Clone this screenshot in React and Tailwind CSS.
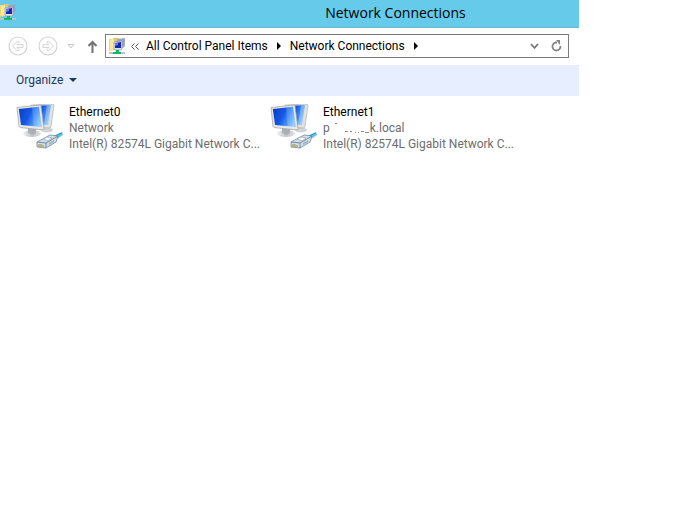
import React from "react";

function FolderNetIcon() {
  return (
    <svg width="17" height="17" viewBox="0 0 17 17" className="shrink-0" aria-hidden="true">
      <path d="M0 1h6v11l-6 1z" fill="#f0d877" />
      <path d="M4 0h6v11H4z" fill="#e3c865" />
      <path d="M1 2l4-1v10l-4 1z" fill="#faeaa0" />
      <path d="M8 1l8-1v8l-2 2H8z" fill="#a3adba" />
      <path d="M9 2l6-1v6l-3 1H9z" fill="#8fa0d0" />
      <path d="M5 4l8-1v8l-1 1H6l-1-1z" fill="#dfe4ec" stroke="#8f9aab" strokeWidth=".8" />
      <path d="M6 5l6-1v6H6z" fill="#1526b0" />
      <path d="M6 5h3v2l-3 1z" fill="#5f7ce6" />
      <path d="M0 14h16v2H0z" fill="#b3c9c9" />
      <path d="M7 12h3v2h2v2H4v-2h3z" fill="#16b765" />
    </svg>
  );
}

function NavArrow({ flip }) {
  return (
    <svg width="20" height="20" viewBox="0 0 20 20" fill="none" stroke="#d4d4d4" aria-hidden="true">
      <circle cx="10" cy="10" r="9" strokeWidth="1.2" />
      <path
        transform={flip ? "translate(20 0) scale(-1 1)" : undefined}
        d="M4.5 10l4.7-4.5h1.8v1L9 8.6h6v2.8H9l2 2.1v1H9.2z"
      />
    </svg>
  );
}

function ConnectionIcon({ id }) {
  const screen = "screen-" + id;
  const stand = "stand-" + id;
  return (
    <svg width="48" height="48" viewBox="0 0 48 48" className="shrink-0" aria-hidden="true">
      <defs>
        <linearGradient id={screen} x1="0" y1=".2" x2="1" y2=".6">
          <stop offset="0" stopColor="#0a3fc4" />
          <stop offset=".45" stopColor="#1658e6" />
          <stop offset=".7" stopColor="#3f8cf8" />
          <stop offset="1" stopColor="#8cc6ff" />
        </linearGradient>
        <linearGradient id={stand} x1="0" y1="0" x2="1" y2="0">
          <stop offset="0" stopColor="#f2f2f2" />
          <stop offset=".5" stopColor="#bfc1c3" />
          <stop offset="1" stopColor="#e2e2e2" />
        </linearGradient>
      </defs>
      <ellipse cx="31" cy="26" rx="6" ry="2.5" fill="#d3d4d5" />
      <path d="M15 1l22-1 1 1-3 22-1 1-19-1z" fill="#e2e2df" stroke="#a9a9a5" strokeWidth=".6" />
      <path d="M17 2l18-1-3 20-15-1z" fill={`url(#${screen})`} />
      <path d="M31 1.2l4-.2-3 20-4-.3z" fill="#d4ecfd" opacity=".35" />
      <ellipse cx="16" cy="29.5" rx="9" ry="3.5" fill={`url(#${stand})`} />
      <path d="M12 24l8 1v4l-3 2-5-2z" fill="#adb0b3" />
      <path d="M1 3.5L24 1l1 .6 3 23-1 1.4L4 23.5 3 22.5z" fill="#e8e8e5" stroke="#9c9d9b" strokeWidth=".7" />
      <path d="M2.8 5L23 2.8 25.8 23 5 21z" fill={`url(#${screen})`} />
      <path d="M16 3.6l7-.8L25.8 23l-8-.8z" fill="#c9e6fd" opacity=".2" />
      <path d="M35 33l11-5 1 3-9 6z" fill="#62c4e8" />
      <path d="M39 32l7-3" stroke="#258fc0" fill="none" />
      <path d="M21 38l13-7 8 1-2 6-10 6-9-1z" fill="#d3dee8" stroke="#718b9e" strokeWidth=".8" />
      <path d="M21 38l9 1 12-7M30 39v5" stroke="#5d778a" strokeWidth=".8" fill="none" />
      <path d="M27 35l4-2 5 1-4 3z" fill="#f7fafc" stroke="#849aac" strokeWidth=".6" />
      <path d="M22 40l6 1v2l-6-1z" fill="#e4d899" />
      <path d="M23 40v3M25 40v3M27 41v2" stroke="#776f4c" strokeWidth=".7" />
      <path d="M33 39l5-3v2l-5 3z" fill="#9eb4c3" />
    </svg>
  );
}

function Crumb({ children }) {
  return (
    <li className="flex items-center">
      <a href="#" className="whitespace-nowrap">{children}</a>
      <svg width="4" height="8" viewBox="0 0 4 8" className="mr-[9px] ml-[9px]" aria-hidden="true">
        <path d="M0 0l4 4-4 4z" fill="#000" />
      </svg>
    </li>
  );
}

function RedactedDomain() {
  return (
    <p className="flex">
      <span>p</span>
      <svg width="40" height="16" viewBox="0 0 40 16" className="shrink-0" aria-hidden="true">
        <path d="M5 3.5h2M15 11.5h3M20 11.5h2M25 12.5h1M28 12.5h1M31 11.5h3M35 12.5h4" stroke="#8b8b8b" fill="none" />
      </svg>
      <span>k.local</span>
    </p>
  );
}

function Connection({ id, name, children }) {
  return (
    <li className="flex w-[254px] shrink-0 gap-[5px]">
      <ConnectionIcon id={id} />
      <div className="whitespace-nowrap leading-4 text-[#6d6d6d]">
        <h2 className="text-black">{name}</h2>
        {children}
        <p>Intel(R) 82574L Gigabit Network C...</p>
      </div>
    </li>
  );
}

export default function App() {
  return (
    <div className="min-h-screen bg-white">
      <main className="mr-28 text-[12px] text-black [font-family:'Segoe_UI',Roboto,'Open_Sans',sans-serif]">
        <header className="flex h-7 items-center border-b border-[#70b4d0] bg-[#66cbea] pb-[2px]">
          <FolderNetIcon />
          <h1 className="flex-1 pl-[195px] text-center text-[14px] leading-5 [font-family:'Segoe_UI','Open_Sans',sans-serif]">
            Network Connections
          </h1>
        </header>

        <nav className="flex h-[37px] items-center pr-[10px] pb-px pl-2">
          <button aria-label="Back"><NavArrow /></button>
          <button aria-label="Forward" className="ml-[10px]"><NavArrow flip /></button>
          <button aria-label="Recent locations" className="ml-[9px]">
            <svg width="8" height="5" viewBox="0 0 8 5" aria-hidden="true">
              <path d="M1 .5h6L4 4z" fill="none" stroke="#c9c9c9" />
            </svg>
          </button>
          <button aria-label="Up" className="ml-3">
            <svg width="11" height="13" viewBox="0 0 11 13" aria-hidden="true">
              <path d="M5.5 13V1.5M1.5 6l4-4 4 4" fill="none" stroke="#707070" strokeWidth="2" />
            </svg>
          </button>
          <div className="ml-[7px] flex h-6 flex-1 items-center border border-[#7c7c7c] pr-[6px] pl-[3px]">
            <FolderNetIcon />
            <svg width="8" height="7" viewBox="0 0 8 7" className="ml-[5px]" aria-hidden="true">
              <path d="M3.5.5l-3 3 3 3M7.5.5l-3 3 3 3" fill="none" stroke="#555" />
            </svg>
            <ol className="ml-[7px] flex items-center">
              <Crumb>All Control Panel Items</Crumb>
              <Crumb>Network Connections</Crumb>
            </ol>
            <button aria-label="Previous locations" className="ml-auto">
              <svg width="9" height="7" viewBox="0 0 9 7" aria-hidden="true">
                <path d="M1 1l3.5 4L8 1" fill="none" stroke="#777" strokeWidth="1.8" />
              </svg>
            </button>
            <button aria-label="Refresh" className="ml-3">
              <svg width="11" height="12" viewBox="0 0 11 12" aria-hidden="true">
                <path d="M6 2.5H5A4 4 0 1 0 9.4 6" fill="none" stroke="#858585" strokeWidth="1.8" />
                <path d="M5 0h4v5z" fill="#858585" />
              </svg>
            </button>
          </div>
        </nav>

        <div className="flex h-[31px] items-center bg-[#e7eeff] px-4 pb-px text-[#1e395b]">
          <button className="flex items-center gap-[6px]">
            Organize
            <svg width="8" height="4" viewBox="0 0 8 4" aria-hidden="true">
              <path d="M0 0h8L4 4z" fill="#1e395b" />
            </svg>
          </button>
        </div>

        <ul className="flex px-4 pt-2">
          <Connection id="0" name="Ethernet0"><p>Network</p></Connection>
          <Connection id="1" name="Ethernet1"><RedactedDomain /></Connection>
        </ul>
      </main>
    </div>
  );
}
